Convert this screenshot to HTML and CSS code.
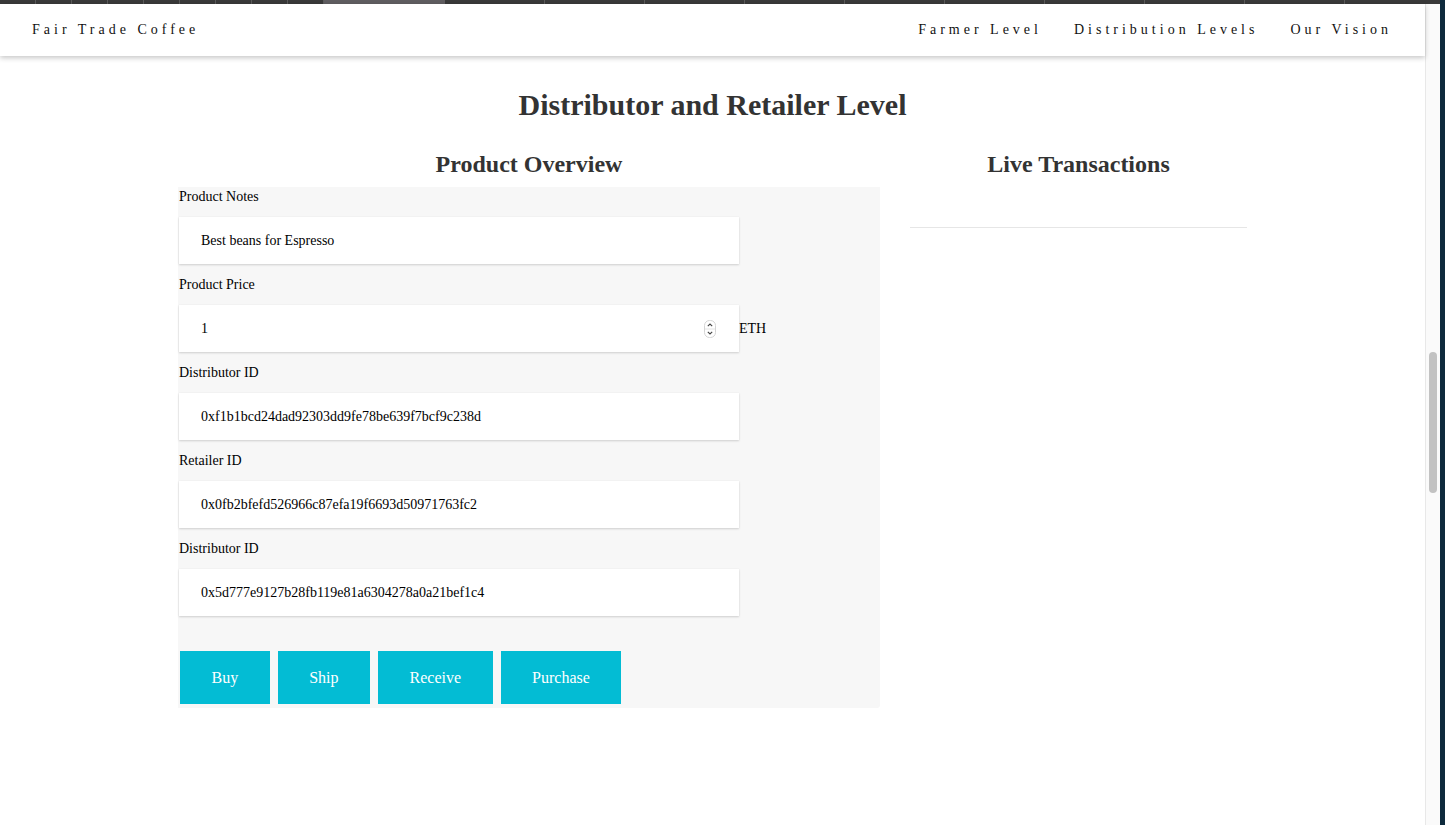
FILE: index.html
```html
<!DOCTYPE html>
<html lang="en">
<head>
<meta charset="utf-8">
<title>Fair Trade Coffee</title>
<link rel="stylesheet" href="styles.css">
</head>
<body>
<div class="frame">
  <div class="tabstrip">
    <span class="tab t36"></span><span class="tab t36"></span><span class="tab t36"></span><span class="tab t36"></span><span class="tab t36"></span><span class="tab t36"></span><span class="tab t36"></span><span class="tab t36"></span><span class="tab t36"></span>
    <span class="tab t121 active"></span>
    <span class="tab t100"></span><span class="tab t100"></span><span class="tab t100"></span><span class="tab t100"></span><span class="tab t100"></span><span class="tab t100"></span><span class="tab t100"></span><span class="tab t100"></span><span class="tab t100"></span><span class="tab rest"></span>
  </div>
  <div class="viewport">
    <div class="page">
      <nav class="navbar">
        <a class="brand">Fair Trade Coffee</a>
        <div class="links">
          <a>Farmer Level</a>
          <a>Distribution Levels</a>
          <a>Our Vision</a>
        </div>
      </nav>
      <main class="main">
        <h1 class="title">Distributor and Retailer Level</h1>
        <div class="columns">
          <section class="col-left">
            <h2 class="subtitle">Product Overview</h2>
            <div class="panel">
              <label class="lbl">Product Notes</label>
              <div class="row"><input class="field" type="text" value="Best beans for Espresso"></div>
              <label class="lbl">Product Price</label>
              <div class="row">
                <div class="field-wrap">
                  <input class="field" type="text" value="1">
                  <svg class="spinner" width="12" height="18" viewBox="0 0 12 18">
                    <rect x="0.5" y="0.5" width="11" height="17" rx="5" fill="#fff" stroke="#d4d4d4"/>
                    <line x1="1" y1="9" x2="11" y2="9" stroke="#e4e4e4"/>
                    <path d="M3.8 6.2 L6 4 L8.2 6.2" fill="none" stroke="#444" stroke-width="1.1"/>
                    <path d="M3.8 11.8 L6 14 L8.2 11.8" fill="none" stroke="#444" stroke-width="1.1"/>
                  </svg>
                </div>
                <span class="unit">ETH</span>
              </div>
              <label class="lbl">Distributor ID</label>
              <div class="row"><input class="field" type="text" value="0xf1b1bcd24dad92303dd9fe78be639f7bcf9c238d"></div>
              <label class="lbl">Retailer ID</label>
              <div class="row"><input class="field" type="text" value="0x0fb2bfefd526966c87efa19f6693d50971763fc2"></div>
              <label class="lbl">Distributor ID</label>
              <div class="row"><input class="field" type="text" value="0x5d777e9127b28fb119e81a6304278a0a21bef1c4"></div>
              <div class="buttons">
                <button class="btn">Buy</button>
                <button class="btn">Ship</button>
                <button class="btn">Receive</button>
                <button class="btn">Purchase</button>
              </div>
            </div>
          </section>
          <section class="col-right">
            <h2 class="subtitle">Live Transactions</h2>
            <hr class="rule">
          </section>
        </div>
      </main>
    </div>
    <div class="scrollbar"><div class="thumb"></div></div>
  </div>
</div>
<div class="edge"></div>
</body>
</html>
```

FILE: styles.css
```css
html, body {
  margin: 0;
  padding: 0;
  height: 825px;
  overflow: hidden;
}
body {
  display: flex;
  font-family: "Liberation Serif", "Times New Roman", serif;
  color: #000;
  background: #fff;
}
.frame {
  width: 1440px;
  display: flex;
  flex-direction: column;
  height: 825px;
}
.tabstrip {
  height: 4px;
  display: flex;
  background: #3a3a3a;
  flex-shrink: 0;
}
.tab {
  height: 4px;
  background: #393939;
  border-right: 1px solid #5a5a5a;
  box-sizing: border-box;
}
.t36 { width: 36px; }
.t121 { width: 121px; }
.t100 { width: 100px; }
.tab.active { background: #5f5d60; border-right-color: #5f5d60; }
.tab.rest { flex: 1; border-right: none; }
.viewport {
  flex: 1;
  display: flex;
  min-height: 0;
}
.page {
  width: 1425px;
  display: flex;
  flex-direction: column;
  position: relative;
}
.navbar {
  height: 52px;
  flex-shrink: 0;
  display: flex;
  align-items: center;
  justify-content: space-between;
  padding: 0 33px 0 32px;
  background: #fff;
  box-shadow: 0 2px 5px rgba(0, 0, 0, 0.22);
  position: relative;
  z-index: 1;
  font-size: 14px;
  letter-spacing: 4px;
  color: #111;
}
.navbar a { color: #111; text-decoration: none; }
.links {
  display: flex;
  gap: 32px;
}
.main {
  flex: 1;
  display: flex;
  flex-direction: column;
  align-items: center;
}
.title {
  margin: 31px 0 0;
  font-size: 30px;
  line-height: 36px;
  font-weight: bold;
  color: #333;
}
.columns {
  display: flex;
  gap: 30px;
  margin-top: 27px;
}
.col-left { width: 702px; }
.col-right { width: 337px; }
.subtitle {
  margin: 0;
  font-size: 24px;
  line-height: 28px;
  font-weight: bold;
  color: #333;
  text-align: center;
}
.panel {
  margin-top: 9px;
  background: #f7f7f7;
  border-radius: 0 0 3px 0;
  padding: 0 0 4px 1px;
  display: flex;
  flex-direction: column;
  align-items: flex-start;
}
.lbl {
  display: block;
  font-size: 14px;
  line-height: 18px;
  padding-top: 1px;
  margin-bottom: 11px;
}
.row {
  display: flex;
  align-items: center;
  margin-bottom: 11px;
}
.field-wrap {
  position: relative;
  display: flex;
}
.field {
  width: 560px;
  height: 47px;
  box-sizing: border-box;
  border: none;
  outline: none;
  padding: 0 22px;
  font-family: "Liberation Serif", "Times New Roman", serif;
  font-size: 14px;
  color: #000;
  background: #fff;
  box-shadow: 0 1px 2px rgba(0, 0, 0, 0.16), 0 0 1px rgba(0, 0, 0, 0.06);
}
.spinner {
  position: absolute;
  right: 23px;
  top: 15px;
}
.unit {
  font-size: 14px;
}
.buttons {
  display: flex;
  gap: 8px;
  margin: 24px 0 0 1px;
}
.btn {
  height: 53px;
  padding: 0 31.5px;
  border: none;
  background: #03bcd4;
  color: #fff;
  font-family: "Liberation Serif", "Times New Roman", serif;
  font-size: 16px;
  cursor: pointer;
}
.rule {
  margin: 49px 0 0;
  border: none;
  border-top: 1px solid #e6e6e6;
  height: 0;
}
.scrollbar {
  width: 15px;
  box-sizing: border-box;
  background: #fafafa;
  border-left: 1px solid #e8e8e8;
  padding-top: 348px;
  display: flex;
  justify-content: center;
}
.thumb {
  width: 8px;
  height: 141px;
  border-radius: 4px;
  background: #c2c2c2;
}
.edge {
  width: 5px;
  height: 825px;
  background: #0e2a3c;
}
```
